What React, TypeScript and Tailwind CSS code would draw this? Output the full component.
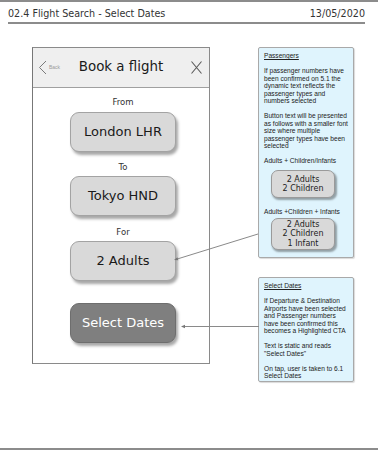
import React from "react";

function Btn({ children, dark = false }: { children: React.ReactNode; dark?: boolean }) {
  return (
    <div
      className={
        "w-[106px] h-[40px] rounded-[9px] border flex items-center justify-center text-[13px] shadow-[2px_3px_3px_rgba(0,0,0,0.35)] " +
        (dark
          ? "bg-[#7f7f7f] border-[#6e6e6e] text-white"
          : "bg-[#d9d9d9] border-[#a3a3a3] text-[#1a1a1a]")
      }
    >
      {children}
    </div>
  );
}

function Label({ children, className = "" }: { children: React.ReactNode; className?: string }) {
  return <div className={"text-[8.5px] leading-[12px] text-[#333] " + className}>{children}</div>;
}

function MiniBtn({ lines, className = "" }: { lines: string[]; className?: string }) {
  return (
    <div
      className={
        "ml-[7px] w-[64px] rounded-[7px] border border-[#9a9a9a] bg-[#d9d9d9] flex flex-col items-center text-[8px] leading-[9.4px] text-[#222] font-['DejaVu_Sans',sans-serif] shadow-[1.5px_2px_2px_rgba(0,0,0,0.35)] " +
        className
      }
    >
      {lines.map((l) => (
        <div key={l}>{l}</div>
      ))}
    </div>
  );
}

function Lines({ lines, className = "" }: { lines: string[]; className?: string }) {
  return (
    <div className={className}>
      {lines.map((l, i) => (
        <div key={i} className="whitespace-nowrap">
          {l}
        </div>
      ))}
    </div>
  );
}

export default function App() {
  return (
    <div className="relative w-[378px] h-[450px] bg-white border-t-2 border-b-2 border-[#8c8c8c] overflow-hidden font-['DejaVu_Sans',sans-serif]">
      {/* title row */}
      <div className="ml-[8px] w-[357px] h-[22px] pt-[4px] border-b-2 border-[#8c8c8c] flex items-center justify-between text-[9.6px] text-[#333]">
        <span>02.4 Flight Search - Select Dates</span>
        <span>13/05/2020</span>
      </div>

      <div className="flex mt-[23px]">
        {/* phone frame */}
        <div className="ml-[32px] w-[178px] h-[317px] border border-[#8a8a8a] border-l-[#777]">
          <div className="h-[40px] bg-[#efefef] border-b border-[#a0a0a0] flex items-center justify-between">
            <div className="w-[40px] pl-[5px] flex items-center gap-[2px]">
              <svg width="9" height="15" viewBox="0 0 9 15">
                <path d="M8 1 L1.5 7.5 L8 14" fill="none" stroke="#7a7a7a" strokeWidth="1" />
              </svg>
              <span className="text-[5px] text-[#9a9a9a] font-['Liberation_Sans',sans-serif]">Back</span>
            </div>
            <div className="text-[13.4px] text-[#1a1a1a]">Book a flight</div>
            <div className="w-[40px] pr-[7px] flex justify-end">
              <svg width="11" height="13" viewBox="0 0 11 13">
                <path d="M0.5 0.5 L10.5 12.5 M10.5 0.5 L0.5 12.5" stroke="#5a5a5a" strokeWidth="1.1" fill="none" />
              </svg>
            </div>
          </div>
          <div className="ml-[37px] w-[106px] pt-[8px] flex flex-col items-center">
            <Label>From</Label>
            <div className="mt-[4px]">
              <Btn>London LHR</Btn>
            </div>
            <Label className="mt-[9px]">To</Label>
            <div className="mt-[3px]">
              <Btn>Tokyo HND</Btn>
            </div>
            <Label className="mt-[10px]">For</Label>
            <div className="mt-[3px]">
              <Btn>2 Adults</Btn>
            </div>
            <div className="mt-[22px]">
              <Btn dark>Select Dates</Btn>
            </div>
          </div>
        </div>

        {/* notes */}
        <div className="ml-[48px] w-[96px] flex flex-col font-['Liberation_Sans',sans-serif] text-[6.6px] leading-[7.5px] text-[#222]">
          <div className="h-[211px] border border-[#a9a9a9] bg-[#dff4fd] rounded-[2px] pl-[5px] pt-[4px] shadow-[1px_1px_1px_rgba(0,0,0,0.15)]">
            <div className="underline">Passengers</div>
            <Lines
              className="mt-[7.5px]"
              lines={[
                "If passenger numbers have",
                "been confirmed on 5.1 the",
                "dynamic text reflects the",
                "passenger types and",
                "numbers selected",
              ]}
            />
            <Lines
              className="mt-[7.5px]"
              lines={[
                "Button text will be presented",
                "as follows with a smaller font",
                "size where multiple",
                "passenger types have been",
                "selected",
              ]}
            />
            <div className="mt-[7.5px] whitespace-nowrap">Adults + Children/Infants</div>
            <MiniBtn className="mt-[5px] py-[4px]" lines={["2 Adults", "2 Children"]} />
            <div className="mt-[10px] whitespace-nowrap">Adults +Children + Infants</div>
            <MiniBtn className="mt-[2px] py-[1px]" lines={["2 Adults", "2 Children", "1 Infant"]} />
          </div>

          <div className="mt-[19px] h-[105px] border border-[#a9a9a9] bg-[#dff4fd] rounded-[2px] pl-[5px] pt-[4px] shadow-[1px_1px_1px_rgba(0,0,0,0.15)]">
            <div className="underline">Select Dates</div>
            <Lines
              className="mt-[7.5px]"
              lines={[
                "If Departure & Destination",
                "Airports have been selected",
                "and Passenger numbers",
                "have been confirmed this",
                "becomes a Highlighted CTA",
              ]}
            />
            <Lines className="mt-[7.5px]" lines={["Text is static and reads", "\"Select Dates\""]} />
            <Lines className="mt-[7.5px]" lines={["On tap, user is taken to 6.1", "Select Dates"]} />
          </div>
        </div>
      </div>

      {/* connector arrows */}
      <svg className="absolute left-0 top-0 pointer-events-none" width="378" height="450" viewBox="0 0 378 450">
        <line x1="258" y1="232" x2="175" y2="257.7" stroke="#8a8a8a" strokeWidth="1" />
        <polygon points="174,258 178.3,258.3 177.4,255.3" fill="#777" />
        <line x1="259" y1="324.5" x2="182" y2="324.5" stroke="#8a8a8a" strokeWidth="1" />
        <polygon points="181,324.5 185,322.8 185,326.2" fill="#777" />
      </svg>
    </div>
  );
}
